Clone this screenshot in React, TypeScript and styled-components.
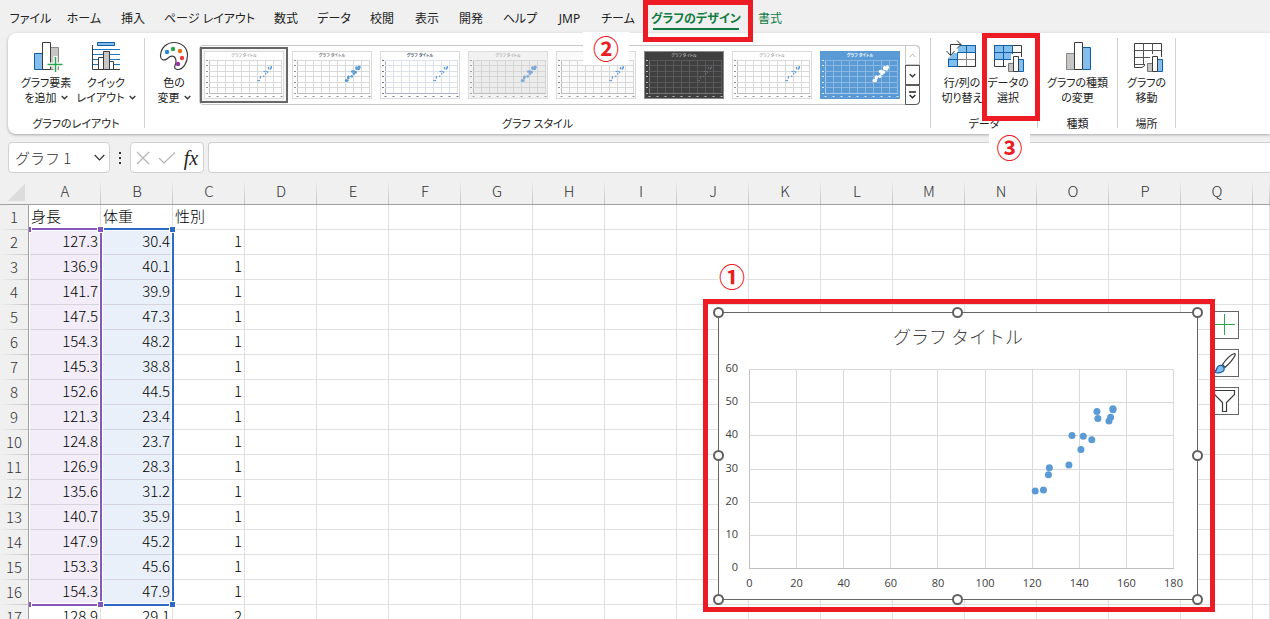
import React from "react";
import styled, { createGlobalStyle, css } from "styled-components";

const ui = `"Noto Sans", "Noto Sans CJK JP", sans-serif`;
const cellFont = `"Noto Sans CJK JP", "Noto Sans", sans-serif`;

const Global = createGlobalStyle`
  * { box-sizing: border-box; }
  body { margin: 0; background: #f0f0f0; overflow: hidden; }
  button, input { font: inherit; color: inherit; margin: 0; padding: 0; border: 0; background: none; }
`;

const Window = styled.div`
  position: relative;
  display: flex;
  flex-direction: column;
  height: 100vh;
  overflow: hidden;
  font-family: ${ui};
  font-size: 11px;
  color: #222;
`;

/* ---------- tabs ---------- */

const TabBar = styled.nav`
  display: flex;
  align-items: flex-start;
  gap: 18px;
  height: 33px;
  padding: 10px 0 0 12px;
  font-size: 12px;
  font-feature-settings: "palt";
`;

const Tab = styled.button<{ $w: number; $tone?: "active" | "context" }>`
  display: flex;
  justify-content: center;
  flex: none;
  width: ${(p) => p.$w}px;
  height: 20px;
  line-height: 18px;
  white-space: nowrap;
  ${(p) => p.$tone && css`color: #107c41;`}
  ${(p) => p.$tone === "active" && css`
    font-weight: bold;
    border-bottom: 2px solid #107c41;
  `}
`;

/* ---------- ribbon ---------- */

const Ribbon = styled.section`
  display: flex;
  flex: none;
  height: 101px;
  margin-left: 8px;
  padding: 5px 0;
  background: #fff;
  border-radius: 8px 0 0 8px;
  box-shadow: 0 1px 3px rgba(0, 0, 0, 0.3);
  font-feature-settings: "palt";
`;

const Group = styled.div<{ $w: number }>`
  display: flex;
  flex-direction: column;
  flex: none;
  width: ${(p) => p.$w}px;
  height: 90px;
  border-right: 1px solid #d0d0d0;
`;

const GroupBody = styled.div<{ $before?: number; $after?: number }>`
  display: flex;
  flex: 1;
  justify-content: center;
  padding: 0 ${(p) => p.$after ?? 0}px 0 ${(p) => p.$before ?? 0}px;
`;

const GroupLabel = styled.div`
  height: 14px;
  margin-bottom: -3px;
  line-height: 14px;
  text-align: center;
  white-space: nowrap;
`;

const Tool = styled.button<{ $w: number }>`
  display: flex;
  flex-direction: column;
  align-items: center;
  flex: none;
  width: ${(p) => p.$w}px;
  padding-top: 3px;
  line-height: 15px;
  white-space: nowrap;
  svg.icon { display: block; margin-bottom: 2px; }
`;

const ToolLine = styled.span`
  display: flex;
  align-items: center;
  gap: 4px;
`;

const Gallery = styled.div`
  display: flex;
  flex: none;
  height: 60px;
  margin: 7px 0 0 0;
  border: 1px solid #c8c8c8;
  border-radius: 4px;
`;

const Style = styled.button<{ $on?: boolean }>`
  width: 88px;
  height: 56px;
  margin-top: 1px;
  padding: 2px;
  border: 2px solid ${(p) => (p.$on ? "#666" : "transparent")};
  background: ${(p) => (p.$on ? "#f5f5f5" : "transparent")};
  svg { display: block; }
`;

const Scroller = styled.div`
  display: flex;
  flex-direction: column;
  width: 15px;
  margin: -1px -1px -1px 1px;
`;

const ScrollButton = styled.button<{ $off?: boolean }>`
  display: flex;
  align-items: center;
  justify-content: center;
  flex: 1;
  border: 1px solid ${(p) => (p.$off ? "#c8c8c8" : "#5a5a5a")};
  color: ${(p) => (p.$off ? "#b0b0b0" : "#222")};
  &:first-child { border-radius: 0 4px 0 0; }
  &:last-child { border-radius: 0 0 4px 0; }
`;

/* ---------- formula bar ---------- */

const FormulaBar = styled.div`
  display: flex;
  flex: none;
  height: 46px;
  padding: 8px 0 8px 8px;
  font-family: ${cellFont};
  font-size: 15px;
`;

const Box = styled.div<{ $w: number }>`
  display: flex;
  align-items: center;
  flex: none;
  width: ${(p) => p.$w}px;
  height: 31px;
  background: #fff;
  border: 1px solid #d0d0d0;
  border-radius: 4px;
`;

const NameInput = styled.input`
  width: 80px;
  padding-left: 6px;
  color: #333;
  font-weight: 300;
  outline: 0;
`;

const IconButton = styled.button`
  display: flex;
  align-items: center;
  justify-content: center;
  flex: 1;
  height: 28px;
`;

const Dots = styled.div`
  display: flex;
  flex-direction: column;
  align-items: center;
  justify-content: center;
  gap: 3px;
  width: 20px;
  height: 31px;
  i { width: 2px; height: 2px; background: #333; }
`;

const Fx = styled.span`
  font: italic 20px/20px "Liberation Serif", serif;
  color: #222;
`;

const FormulaInput = styled.input`
  flex: 1;
  height: 31px;
  margin-left: 4px;
  padding: 0 8px;
  background: #fff;
  border: 1px solid #d0d0d0;
  border-right: 0;
  border-radius: 4px 0 0 4px;
  outline: 0;
`;

/* ---------- sheet ---------- */

const Sheet = styled.main`
  position: relative;
  flex: 1;
  min-height: 0;
  overflow: hidden;
  font-family: ${cellFont};
  font-size: 15px;
`;

const Table = styled.table`
  width: 100%;
  table-layout: fixed;
  border-collapse: separate;
  border-spacing: 0;
  line-height: 20px;
  tr { height: 25px; }
  th, td { height: 25px; padding: 0 0 2px; font-weight: 300; white-space: nowrap; }
`;

const ColHead = styled.th`
  color: #333;
  border-bottom: 1px solid #a0a0a0;
  background: linear-gradient(to bottom, transparent, #c4c4c4) right / 1px 100% no-repeat;
`;

const Corner = styled.th`
  border-bottom: 1px solid #a0a0a0;
  svg { display: block; margin: 3px 0 0 8px; }
`;

const RowHead = styled.th`
  color: #333;
  border-right: 1px solid #a0a0a0;
  background: linear-gradient(to right, transparent, #c4c4c4) bottom / 100% 1px no-repeat;
`;

const Cell = styled.td<{ $range?: "x" | "y"; $num?: boolean }>`
  color: #000;
  text-align: ${(p) => (p.$num ? "right" : "left")};
  && { padding: ${(p) => (p.$num ? "0 2px 2px 0" : "0 0 2px 2px")}; }
  background: ${(p) => (p.$range === "x" ? "#f2edf8" : p.$range === "y" ? "#eaf0f9" : "#fff")};
  border-right: 1px solid #e0e0e0;
  border-bottom: 1px solid ${(p) => (p.$range ? "#d5d3dc" : "#e0e0e0")};
`;

const RangeFrame = styled.div<{ $x: number; $w: number; $c: string }>`
  position: absolute;
  left: ${(p) => p.$x}px;
  top: 48px;
  width: ${(p) => p.$w}px;
  height: 378px;
  border: 2px solid ${(p) => p.$c};
  border-left: 0;
  box-shadow: inset 0 0 0 1px #fff;
`;

const RangeHandle = styled.i<{ $x: number; $y: number; $c: string; $half?: boolean }>`
  position: absolute;
  left: ${(p) => p.$x}px;
  top: ${(p) => p.$y}px;
  width: ${(p) => (p.$half ? 3 : 7)}px;
  height: 7px;
  background: ${(p) => p.$c};
  border: 1px solid #fff;
  ${(p) => p.$half && css`border-left: 0;`}
`;

/* ---------- chart object ---------- */

const ChartFrame = styled.div`
  position: absolute;
  left: 718px;
  top: 132px;
  width: 480px;
  height: 288px;
  background: #fff;
  border: 1px solid #666;
  svg.plot { display: block; }
`;

const Handle = styled.i<{ $h: string; $v: string }>`
  position: absolute;
  left: ${(p) => p.$h};
  top: ${(p) => p.$v};
  width: 11px;
  height: 11px;
  margin: -6px;
  border: 2px solid #606060;
  border-radius: 50%;
  background: #fff;
`;

const SideButtons = styled.div`
  position: absolute;
  left: 1211px;
  top: 131px;
  display: flex;
  flex-direction: column;
  gap: 10px;
`;

const SideButton = styled.button`
  width: 28px;
  height: 28px;
  background: #fff;
  border: 1px solid #666;
  svg { display: block; }
`;

/* ---------- tutorial marks ---------- */

const RedFrame = styled.div<{ $x: number; $y: number; $w: number; $h: number }>`
  position: absolute;
  left: ${(p) => p.$x}px;
  top: ${(p) => p.$y}px;
  width: ${(p) => p.$w}px;
  height: ${(p) => p.$h}px;
  border: 5px solid #ed1c24;
  pointer-events: none;
`;

const Step = styled.div<{ $x: number; $y: number; $w: number; $h: number }>`
  position: absolute;
  left: ${(p) => p.$x}px;
  top: ${(p) => p.$y}px;
  display: flex;
  align-items: center;
  justify-content: center;
  width: ${(p) => p.$w}px;
  height: ${(p) => p.$h}px;
  padding-bottom: 2px;
  background: #fff;
  color: #ed1c24;
  font: bold 26px/26px "Noto Sans CJK JP", sans-serif;
`;

/* ---------- data ---------- */

const rows: [number, number, number][] = [
  [127.3, 30.4, 1], [136.9, 40.1, 1], [141.7, 39.9, 1], [147.5, 47.3, 1],
  [154.3, 48.2, 1], [145.3, 38.8, 1], [152.6, 44.5, 1], [121.3, 23.4, 1],
  [124.8, 23.7, 1], [126.9, 28.3, 1], [135.6, 31.2, 1], [140.7, 35.9, 1],
  [147.9, 45.2, 1], [153.3, 45.6, 1], [154.3, 47.9, 1], [128.9, 29.1, 2],
];
const points = rows.slice(0, 15);
const columns = "ABCDEFGHIJKLMNOPQ".split("");

const tabs: [string, number, ("active" | "context")?][] = [
  ["ファイル", 37], ["ホーム", 34], ["挿入", 28], ["ページ レイアウト", 89], ["数式", 28],
  ["データ", 32], ["校閲", 28], ["表示", 26], ["開発", 26], ["ヘルプ", 36], ["JMP", 27],
  ["チーム", 34], ["グラフのデザイン", 86, "active"], ["書式", 26, "context"],
];

/* ---------- drawings ---------- */

const BLUE = "#83beec";
const EDGE = "#0f5fa8";
const INK = "#3b3b3b";
const GREY = "#c8c6c4";

const Icon = ({ children }: { children: React.ReactNode }) => (
  <svg className="icon" width="32" height="32" viewBox="0 0 32 32" fill="none" overflow="visible" aria-hidden="true">
    {children}
  </svg>
);

const Chevron = () => (
  <svg width="7" height="5" viewBox="0 0 7 5" fill="none" stroke="#333" strokeWidth="1.3">
    <path d="M.7 1 3.5 3.8 6.3 1" />
  </svg>
);

const SmallBars = () => (
  <>
    <path d="M14 20h5v-7h9v3h4v16H14z" fill="#fff" />
    <path d="M16.5 22.5h5v8h-5z" fill={GREY} stroke="#777" />
    <path d="M26.5 18.5h5v12h-5z" fill={BLUE} stroke={EDGE} />
    <path d="M21.5 15.5h5v15h-5z" fill="#fff" stroke={INK} />
  </>
);

const AddElementIcon = () => (
  <Icon>
    <path d="M4.5 12.5h8v16h-8z" fill={BLUE} stroke={EDGE} />
    <path d="M20.5 6.5h8v22h-8z" fill={GREY} stroke="#8a8886" />
    <path d="M12.5 1.5h8v27h-8z" fill="#fff" stroke={INK} />
    <path d="M17.5 23.5h16M25.5 15v16" stroke="#fff" strokeWidth="4" />
    <path d="M17.5 23.5h15M25.5 16v15" stroke="#2da44e" strokeWidth="1.5" />
  </Icon>
);

const QuickLayoutIcon = () => (
  <Icon>
    <path d="M7.5 1.5h17v3h-17z" fill={BLUE} stroke={EDGE} />
    <path d="M3 8.5h27M3 13.5h27M3 18.5h27M3 23.5h27" stroke="#1f77c0" />
    <path d="M8.5 16.5h5v12h-5zM19.5 20.5h4v8h-4z" fill="#fff" stroke={INK} />
    <path d="M13.5 10.5h6v18h-6z" fill={GREY} stroke={INK} />
    <path d="M2.5 4v24.5H30" stroke={INK} />
  </Icon>
);

const PaletteIcon = () => (
  <Icon>
    <path
      d="M2.500 14.500C3 6.500 9 1.500 16 1.500c8 0 13.500 5.500 13.500 13 0 6.500-4 14-9.500 14-2.500 0-3.700-1.200-3.300-3.200.4-1.800 1.500-2.600 1.300-5.300-.2-3-1.800-4.800-4.300-4.800-2 0-3.200 1.600-5 2.900-3.400 1.800-6.400.4-6.200-3.600Z"
      fill="#fff" stroke={INK} strokeWidth="1.2"
    />
    <circle cx="9" cy="11" r="2.2" fill="#1e88d8" />
    <circle cx="15" cy="8" r="2.2" fill="#2da44e" />
    <circle cx="22" cy="10" r="2.2" fill="#e0730a" />
    <circle cx="24" cy="17" r="2.2" fill="#ee3e3e" />
    <circle cx="20" cy="23" r="2.2" fill="#9333a8" />
  </Icon>
);

const SwitchIcon = () => (
  <Icon>
    <path d="M2.5 4.5h27v21h-27z" fill="#fff" stroke={INK} />
    <path d="M12 4.5h17.5v7H12zM2.5 12h9v13.5h-9z" fill={BLUE} />
    <path d="M11.5 18.5h18M20.5 11.5v14" stroke="#8a8886" />
    <path d="M11.5 25.5h18v-14" stroke={INK} />
    <path d="M12 4.5h17.5v7h-18v14h-9v-7h9M20.5 4.5v7M2.5 18v7" stroke={EDGE} />
    <path d="M0 1h17L0 20z" fill="#fff" />
    <path d="M4.5 14V3.500H15M.5 10l4 4.500 4-4.500M11-.5l4 4-4 4" stroke={INK} />
  </Icon>
);

const SelectDataIcon = () => (
  <Icon>
    <path d="M2.5 4.5h27v21h-27z" fill="#fff" stroke={INK} />
    <path d="M20.5 11.5h9M2.5 18.5h27M20.5 4.5v21M11.5 18.5v7" stroke={INK} />
    <path d="M2.5 4.5h18v14h-18z" fill={BLUE} stroke={EDGE} />
    <path d="M2.5 11.5h18M11.5 4.5v14" stroke={EDGE} />
    <SmallBars />
  </Icon>
);

const ChartTypeIcon = () => (
  <Icon>
    <path d="M4.5 12.5h8v16h-8z" fill={GREY} stroke="#8a8886" />
    <path d="M20.5 6.5h8v22h-8z" fill={BLUE} stroke={EDGE} />
    <path d="M12.5 1.5h8v27h-8z" fill="#fff" stroke={INK} />
  </Icon>
);

const MoveChartIcon = () => (
  <Icon>
    <path d="M3.5 2.5h27v21H15l-4 3H3.5z" fill="#fff" stroke={INK} />
    <path d="M3.5 9.5h27M3.5 16.5h27M12.5 2.5v21M21.5 2.5v21M3.5 23.5h12" stroke="#555" />
    <SmallBars />
  </Icon>
);

type Look = {
  bg?: string; frame?: string; grid?: string; axis?: string; text?: string;
  dot?: string; r?: number; bold?: boolean; plot?: string; untitled?: boolean;
};

const looks: Look[] = [
  {},
  { r: 1.3, bold: true },
  { grid: "#dde1ec", axis: "#a9b2c9", text: "#44546a", bold: true },
  { bg: "#f2f2f2", plot: "#ececec", grid: "#d6d6d6", r: 1.3, dot: "#7fa9d3", text: "#888" },
  { bg: "#fafafa", untitled: true },
  { bg: "#404040", frame: "#8c8c8c", grid: "#595959", axis: "#777", text: "#ddd", dot: "#7b8896", r: 0.5 },
  {},
  { bg: "#5b9bd5", frame: "#5b9bd5", grid: "#8ab8e2", axis: "#a9cbea", text: "#fff", dot: "#fff", r: 1.6, bold: true },
];

const steps = (n: number) => Array.from({ length: n }, (_, i) => i);

const Thumb = ({ look }: { look: Look }) => {
  const { bg = "#fff", frame = "#dcdcdc", grid = "#d9d9d9", axis = "#bdbdbd", text = "#777", dot = "#5b9bd5", r = 0.8, bold, plot, untitled } = look;
  return (
    <svg width="80" height="48" viewBox="0 0 80 48">
      <rect x=".5" y=".5" width="79" height="47" fill={bg} stroke={frame} />
      {plot && <rect x="5" y="10" width="72" height="33" fill={plot} />}
      {steps(10).map((i) => (
        <path key={i} d={`M${5.5 + i * 8} 9V43`} stroke={i ? grid : axis} />
      ))}
      {steps(7).map((i) => (
        <path key={i} d={`M5 ${42.5 - Math.round(i * 5.5)}H78`} stroke={i ? grid : axis} />
      ))}
      {steps(10).map((i) => (
        <rect key={i} x={4.5 + i * 8} y="45" width="2" height="1" fill={text} opacity=".8" />
      ))}
      {steps(7).map((i) => (
        <rect key={i} x="2" y={42 - Math.round(i * 5.5)} width="2" height="1" fill={text} opacity=".8" />
      ))}
      {!untitled && (
        <text x="40" y="6" textAnchor="middle" fontSize="4" fontWeight={bold ? 700 : 400} fill={text}>
          グラフ タイトル
        </text>
      )}
      {points.map(([x, y], i) => (
        <circle key={i} cx={5.5 + x * 0.4} cy={42.5 - y * 0.55} r={r} fill={dot} />
      ))}
    </svg>
  );
};

const px = (x: number) => 30.5 + x * (424 / 180);
const py = (y: number) => 255.5 - y * (199 / 60);

const ScatterPlot = () => (
  <svg className="plot" width="478" height="286" viewBox="0 0 478 286" fontFamily={`"Open Sans", sans-serif`} fontSize="11" fill="#404040">
    <text x="239" y="31" textAnchor="middle" fontFamily={cellFont} fontSize="18" fontWeight="300">グラフ タイトル</text>
    {steps(10).map((i) => (
      <g key={i}>
        <path d={`M${Math.floor(px(i * 20)) + 0.5} 56V256`} stroke={i ? "#d9d9d9" : "#bfbfbf"} />
        <text x={px(i * 20)} y="274" textAnchor="middle">{i * 20}</text>
      </g>
    ))}
    {steps(7).map((i) => (
      <g key={i}>
        <path d={`M30 ${Math.floor(py(i * 10)) + 0.5}H455`} stroke={i ? "#d9d9d9" : "#bfbfbf"} />
        <text x="19" y={Math.floor(py(i * 10)) + 3} textAnchor="end">{i * 10}</text>
      </g>
    ))}
    {points.map(([x, y], i) => (
      <circle key={i} cx={px(x)} cy={py(y)} r="3.5" fill="#5b9bd5" />
    ))}
  </svg>
);

const stops = ["0%", "50%", "calc(100% + 1px)"];

/* ---------- page ---------- */

export default function App() {
  return (
    <>
      <Global />
      <Window>
        <TabBar>
          {tabs.map(([label, w, tone]) => (
            <Tab key={label} $w={w} $tone={tone}>{label}</Tab>
          ))}
        </TabBar>

        <Ribbon>
          <Group $w={137}>
            <GroupBody>
              <Tool $w={60}>
                <AddElementIcon />
                <ToolLine>グラフ要素</ToolLine>
                <ToolLine>を追加 <Chevron /></ToolLine>
              </Tool>
              <Tool $w={60}>
                <QuickLayoutIcon />
                <ToolLine>クイック</ToolLine>
                <ToolLine>レイアウト <Chevron /></ToolLine>
              </Tool>
            </GroupBody>
            <GroupLabel>グラフのレイアウト</GroupLabel>
          </Group>

          <Group $w={786}>
            <GroupBody $after={6}>
              <Tool $w={50}>
                <PaletteIcon />
                <ToolLine>色の</ToolLine>
                <ToolLine>変更 <Chevron /></ToolLine>
              </Tool>
              <Gallery>
                {looks.map((look, i) => (
                  <Style key={i} $on={i === 0} aria-label={`スタイル ${i + 1}`}>
                    <Thumb look={look} />
                  </Style>
                ))}
                <Scroller>
                  <ScrollButton $off aria-label="上へ">
                    <svg width="7" height="5" viewBox="0 0 7 5" fill="none" stroke="currentColor"><path d="M.7 4 3.5 1.2 6.3 4" /></svg>
                  </ScrollButton>
                  <ScrollButton aria-label="下へ"><Chevron /></ScrollButton>
                  <ScrollButton aria-label="その他">
                    <svg width="7" height="8" viewBox="0 0 7 8" fill="none" stroke="currentColor" strokeWidth="1.3"><path d="M0 1h7M.7 4 3.5 6.8 6.3 4" /></svg>
                  </ScrollButton>
                </Scroller>
              </Gallery>
            </GroupBody>
            <GroupLabel>グラフ スタイル</GroupLabel>
          </Group>

          <Group $w={107}>
            <GroupBody $before={2}>
              <Tool $w={46}>
                <SwitchIcon />
                <ToolLine>行/列の</ToolLine>
                <ToolLine>切り替え</ToolLine>
              </Tool>
              <Tool $w={46}>
                <SelectDataIcon />
                <ToolLine>データの</ToolLine>
                <ToolLine>選択</ToolLine>
              </Tool>
            </GroupBody>
            <GroupLabel>データ</GroupLabel>
          </Group>

          <Group $w={80}>
            <GroupBody>
              <Tool $w={72}>
                <ChartTypeIcon />
                <ToolLine>グラフの種類</ToolLine>
                <ToolLine>の変更</ToolLine>
              </Tool>
            </GroupBody>
            <GroupLabel>種類</GroupLabel>
          </Group>

          <Group $w={58}>
            <GroupBody>
              <Tool $w={50}>
                <MoveChartIcon />
                <ToolLine>グラフの</ToolLine>
                <ToolLine>移動</ToolLine>
              </Tool>
            </GroupBody>
            <GroupLabel>場所</GroupLabel>
          </Group>
        </Ribbon>

        <FormulaBar>
          <Box $w={102}>
            <NameInput aria-label="名前ボックス" defaultValue="グラフ 1" />
            <IconButton aria-label="名前の一覧">
              <svg width="11" height="7" viewBox="0 0 11 7" fill="none" stroke="#333" strokeWidth="1.2"><path d="M.7 1 5.5 5.8 10.3 1" /></svg>
            </IconButton>
          </Box>
          <Dots><i /><i /><i /></Dots>
          <Box $w={74}>
            <IconButton aria-label="キャンセル">
              <svg width="14" height="14" viewBox="0 0 14 14" stroke="#b5b5b5" strokeWidth="1.2"><path d="M1 1l12 12M13 1 1 13" /></svg>
            </IconButton>
            <IconButton aria-label="入力">
              <svg width="18" height="14" viewBox="0 0 18 14" fill="none" stroke="#b5b5b5" strokeWidth="1.2"><path d="M1 7l5 5L17 1.5" /></svg>
            </IconButton>
            <IconButton aria-label="関数の挿入"><Fx>fx</Fx></IconButton>
          </Box>
          <FormulaInput aria-label="数式バー" />
        </FormulaBar>

        <Sheet>
          <Table>
            <colgroup>
              <col style={{ width: 29 }} />
              {columns.map((c) => <col key={c} style={{ width: 72 }} />)}
              <col />
            </colgroup>
            <thead>
              <tr>
                <Corner>
                  <svg width="17" height="17" viewBox="0 0 17 17"><path d="M17 0v17H0z" fill="#dcdcdc" /></svg>
                </Corner>
                {columns.map((c) => <ColHead key={c}>{c}</ColHead>)}
                <ColHead />
              </tr>
            </thead>
            <tbody>
              <tr>
                <RowHead>1</RowHead>
                <Cell>身長</Cell>
                <Cell>体重</Cell>
                <Cell>性別</Cell>
                {steps(15).map((i) => <Cell key={i} />)}
              </tr>
              {rows.map(([h, w, s], r) => (
                <tr key={r}>
                  <RowHead>{r + 2}</RowHead>
                  <Cell $num $range={r < 15 ? "x" : undefined}>{h.toFixed(1)}</Cell>
                  <Cell $num $range={r < 15 ? "y" : undefined}>{w.toFixed(1)}</Cell>
                  <Cell $num>{s}</Cell>
                  {steps(15).map((i) => <Cell key={i} />)}
                </tr>
              ))}
            </tbody>
          </Table>

          <RangeFrame $x={102} $w={72} $c="#2f69c8" />
          <RangeFrame $x={29} $w={73} $c="#8458b8" />
          <RangeHandle $x={29} $y={46} $c="#8458b8" $half />
          <RangeHandle $x={29} $y={421} $c="#8458b8" $half />
          <RangeHandle $x={97} $y={46} $c="#8458b8" />
          <RangeHandle $x={97} $y={421} $c="#8458b8" />
          <RangeHandle $x={169} $y={46} $c="#2f69c8" />
          <RangeHandle $x={169} $y={421} $c="#2f69c8" />

          <ChartFrame>
            <ScatterPlot />
            {stops.map((v) =>
              stops.map((h) =>
                v === "50%" && h === "50%" ? null : <Handle key={v + h} $h={h} $v={v} />
              )
            )}
          </ChartFrame>

          <SideButtons>
            <SideButton aria-label="グラフ要素">
              <svg width="26" height="26" viewBox="0 0 26 26" stroke="#2da44e"><path d="M2 12.5h21M12.5 2v21" /></svg>
            </SideButton>
            <SideButton aria-label="グラフ スタイル">
              <svg width="26" height="26" viewBox="0 0 26 26" fill="#fff" stroke={INK} strokeWidth="1.2">
                <path d="M10.500 14.500C14 9.500 19 4.500 22.500 3.500c1 .3 1 1 .6 1.800C21 9.500 17 14 13 17.500z" />
                <path d="M2 22c2-.5 2.500-2 3-4 .8-2.500 4-3.500 6-1.800 2 1.800 1.500 4.600-1 5.800-2.400 1.200-5.500 1-8 0z" fill={BLUE} stroke={EDGE} />
              </svg>
            </SideButton>
            <SideButton aria-label="グラフ フィルター">
              <svg width="26" height="26" viewBox="0 0 26 26" fill="#fff" stroke={INK} strokeWidth="1.2">
                <path d="M2.5 2.5h20v4l-8 8v9h-4v-9l-8-8z" />
              </svg>
            </SideButton>
          </SideButtons>
        </Sheet>

        <RedFrame $x={643} $y={0} $w={110} $h={42} />
        <RedFrame $x={982} $y={33} $w={58} $h={88} />
        <RedFrame $x={703} $y={299} $w={512} $h={313} />
        <Step $x={718} $y={263} $w={28} $h={28}>①</Step>
        <Step $x={583} $y={32} $w={46} $h={33}>②</Step>
        <Step $x={989} $y={134} $w={41} $h={27}>③</Step>
      </Window>
    </>
  );
}
